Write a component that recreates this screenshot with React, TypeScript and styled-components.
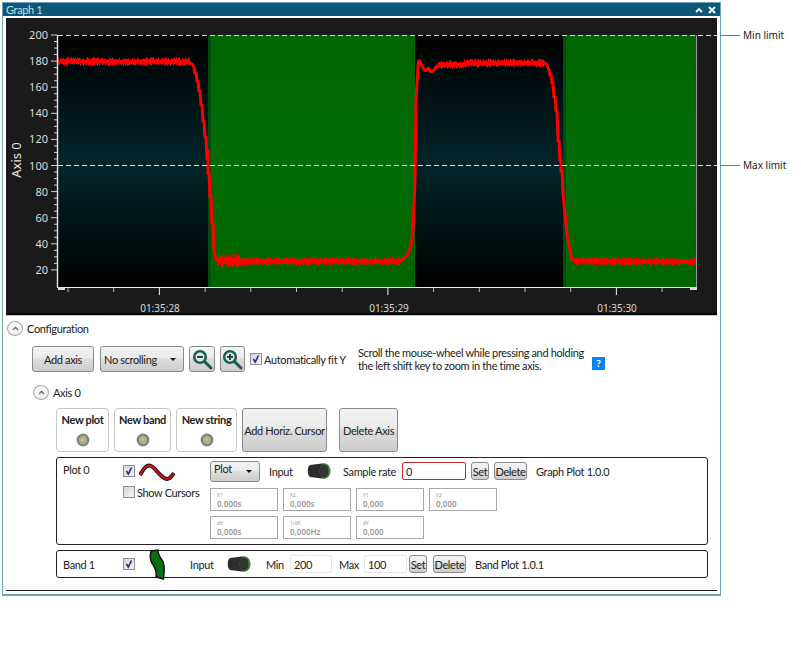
import * as React from 'react';
import styled, { createGlobalStyle } from 'styled-components';

const GlobalStyle = createGlobalStyle`
  html, body {
    margin: 0;
    background: #ffffff;
    font-family: Lato, "Noto Sans", sans-serif;
    font-size: 11px;
    letter-spacing: -0.35px;
    color: #222222;
  }
`;

const Page = styled.div`
  position: relative;
  width: 801px;
  height: 660px;
  padding: 2px 0 0 2px;
  box-sizing: border-box;
  overflow: hidden;
`;

const Window = styled.div`
  width: 719px;
  height: 594px;
  box-sizing: border-box;
  border: 1px solid #6fa3bd;
  border-bottom-width: 2px;
  background: #ffffff;
`;

const TitleBar = styled.div`
  height: 13px;
  background: #0b5878;
  color: #c9dbe4;
  display: flex;
  align-items: center;
  justify-content: space-between;
  padding: 0 4px 0 3px;
  line-height: 13px;
`;

const TitleIcons = styled.div`
  display: flex;
  align-items: center;
  gap: 5px;
`;

const ChartPanel = styled.div`
  margin: 2px 0 0 3px;
  width: 711px;
  height: 297px;
  background: #1a1a1a;
  border-bottom: 1px solid #c8c8c8;
  svg {
    display: block;
  }
`;

const Config = styled.div`
  margin-left: 3px;
  width: 711px;
  height: 275px;
  box-sizing: border-box;
  padding-top: 5px;
  border-bottom: 1px solid #1a1a1a;
`;

const ToggleRow = styled.div<{ $indent: number }>`
  display: flex;
  align-items: center;
  gap: 4px;
  padding-left: ${p => p.$indent}px;
  height: 15px;
`;

const ToggleCircle = styled.span`
  width: 16px;
  height: 15px;
  box-sizing: border-box;
  border: 1px solid #a8a8a8;
  border-radius: 50%;
  background: linear-gradient(#ffffff, #ececec);
  display: flex;
  align-items: center;
  justify-content: center;
`;

const Toolbar = styled.div`
  display: flex;
  align-items: center;
  height: 26px;
  margin-top: 10px;
  padding-left: 26px;
`;

const Button = styled.button<{ $w: number; $h?: number; $ml?: number }>`
  width: ${p => p.$w}px;
  height: ${p => p.$h ?? 26}px;
  margin-left: ${p => p.$ml ?? 0}px;
  padding: 0;
  box-sizing: border-box;
  border: 1px solid #8a8a8a;
  border-radius: 3px;
  background: linear-gradient(#f3f3f3 0%, #ebebeb 45%, #dddddd 50%, #cdcdcd 100%);
  font: inherit;
  letter-spacing: inherit;
  color: #222222;
  white-space: nowrap;
  display: flex;
  align-items: center;
  justify-content: center;
  flex: none;
`;

const Select = styled(Button)<{ $alignTop?: boolean }>`
  justify-content: space-between;
  padding: 0 7px 0 3px;
  align-items: ${p => (p.$alignTop ? 'flex-start' : 'center')};
  &::after {
    content: '';
    align-self: center;
    border-left: 3px solid transparent;
    border-right: 3px solid transparent;
    border-top: 3px solid #111111;
  }
`;

const Check = styled.span<{ $ml?: number }>`
  width: 12px;
  height: 12px;
  box-sizing: border-box;
  border: 1px solid #8f8f8f;
  background: linear-gradient(135deg, #d6d6d6, #f4f4f4);
  margin-left: ${p => p.$ml ?? 0}px;
  display: flex;
  align-items: center;
  justify-content: center;
  flex: none;
`;

const CheckLabel = styled.span<{ $w?: number }>`
  margin-left: 2px;
  white-space: nowrap;
  width: ${p => (p.$w ? `${p.$w}px` : 'auto')};
  flex: none;
`;

const HelpText = styled.div`
  margin-left: 11px;
  width: 234px;
  line-height: 13px;
  white-space: nowrap;
`;

const HelpBadge = styled.span`
  width: 13px;
  height: 13px;
  margin-top: 9px;
  background: #0a84f0;
  color: #ffffff;
  font-weight: 700;
  font-size: 10px;
  line-height: 13px;
  text-align: center;
`;

const AxisToggle = styled(ToggleRow)`
  margin-top: 13px;
`;

const PlotActions = styled.div`
  display: flex;
  margin: 8px 0 0 50px;
  height: 44px;
`;

const NewCard = styled.div<{ $w: number }>`
  width: ${p => p.$w}px;
  height: 44px;
  margin-right: 5px;
  box-sizing: border-box;
  border: 1px solid #c6c6c6;
  border-radius: 4px;
  font-weight: 700;
  text-align: center;
  padding-top: 4px;
  white-space: nowrap;
  svg {
    display: block;
    margin: 7px auto 0;
  }
`;

const PlotBox = styled.div`
  margin: 5px 0 0 50px;
  width: 652px;
  height: 88px;
  box-sizing: border-box;
  border: 1px solid #222222;
  border-radius: 3px;
  padding: 2px 0 0 6px;
  display: flex;
`;

const BandBox = styled.div`
  margin: 5px 0 0 50px;
  width: 652px;
  height: 28px;
  box-sizing: border-box;
  border: 1px solid #222222;
  border-radius: 3px;
  padding-left: 6px;
  display: flex;
  align-items: center;
`;

const NameCell = styled.div<{ $pt?: number }>`
  width: 60px;
  flex: none;
  padding-top: ${p => p.$pt ?? 0}px;
`;

const CheckColumn = styled.div`
  width: 87px;
  flex: none;
  display: flex;
  flex-direction: column;
`;

const CheckRow = styled.div<{ $h: number }>`
  display: flex;
  align-items: center;
  height: ${p => p.$h}px;
`;

const FieldsColumn = styled.div`
  display: flex;
  flex-direction: column;
`;

const FieldsTop = styled.div`
  display: flex;
  align-items: center;
  height: 22px;
`;

const Text = styled.span<{ $ml: number; $w?: number }>`
  margin-left: ${p => p.$ml}px;
  width: ${p => (p.$w ? `${p.$w}px` : 'auto')};
  white-space: nowrap;
  flex: none;
`;

const ValueGrid = styled.div`
  display: grid;
  grid-template-columns: repeat(4, 68px);
  grid-auto-rows: 23px;
  gap: 5px;
  margin-top: 6px;
`;

const ValueBox = styled.div`
  box-sizing: border-box;
  border: 1px solid #a8a8a8;
  padding: 3px 0 0 6px;
  color: #999999;
  font-family: "Noto Sans", sans-serif;
  letter-spacing: 0;
`;

const ValueLabel = styled.div`
  font-size: 5px;
  line-height: 7px;
`;

const ValueText = styled.div`
  font-size: 8px;
  line-height: 10px;
  font-weight: 600;
`;

const Field = styled.input<{ $w: number; $ml: number; $alert?: boolean }>`
  width: ${p => p.$w}px;
  height: 18px;
  margin-left: ${p => p.$ml}px;
  box-sizing: border-box;
  border: 1px solid ${p => (p.$alert ? '#c0282d' : '#e6e6e6')};
  border-radius: 2px;
  padding: 0 3px;
  font: inherit;
  letter-spacing: inherit;
  color: #222222;
  flex: none;
`;

const Annotation = styled.div<{ $top: number }>`
  position: absolute;
  left: 720px;
  top: ${p => p.$top - 8}px;
  height: 16px;
  display: flex;
  align-items: center;
  gap: 3px;
  font-family: "Noto Sans", sans-serif;
  font-size: 10px;
  letter-spacing: 0;
  white-space: nowrap;
  &::before {
    content: '';
    width: 20px;
    height: 1px;
    background: #777777;
  }
`;

const yOf = (v: number) => 35 + (200 - v) * 1.305;

// repeatable jitter so the trace looks like the noisy signal
const noise = (i: number) => {
  const s = Math.sin(i * 12.9898) * 43758.5453;
  return s - Math.floor(s);
};

const tracePoints = [
  '58,61.5', '186,61.5', '188,61', '190,63', '192,64', '194,67', '195,74', '196,72', '197,82', '198,80',
  '199,92', '200,90', '201,106', '202,104', '203,122', '204,120', '205,138', '206,136', '207,160', '208,150',
  '208,175', '209,172', '210,198', '211,195', '212,225', '213,222', '214,250', '216,260', '400,261.5',
  '404,258', '408,254', '411,245', '413,232', '415,180', '416,100', '418,66', '419,60', '422,66',
  '425,71', '428,68', '431,72', '434,70', '437,66', '470,64', '545,63',
  '547,65', '549,70', '550,76', '551,74', '552,84', '553,82', '554,98', '555,96', '556,112', '557,110',
  '558,142', '559,140', '560,162', '561,160', '561,172', '562,170', '563,194', '565,214', '567,234',
  '570,250', '572,260', '696,261.5',
].join(' ');

// the noise itself: one short vertical hair per pixel around the line
const hairs = (from: number, to: number, y0: number, y1: number, amp: number, seed: number) => {
  let d = '';
  for (let x = from, i = 0; x < to; x += 1, i++) {
    const y = y0 + ((y1 - y0) * (x - from)) / (to - from);
    const up = amp * (0.35 + 0.65 * noise(i + seed));
    const down = amp * (0.35 + 0.65 * noise(i * 2 + seed + 77));
    d += `M${x + 0.5} ${(y - up).toFixed(1)}V${(y + down).toFixed(1)}`;
  }
  return d;
};

const tracePath = [
  hairs(58, 190, 61.5, 61.5, 4.5, 1),
  hairs(217, 240, 261, 261, 7, 300),
  hairs(240, 400, 261.5, 261.5, 4.5, 400),
  hairs(438, 470, 65, 64, 4.5, 600),
  hairs(470, 545, 63, 63, 4.5, 700),
  hairs(574, 696, 261.5, 261.5, 4.5, 900),
].join('');

const xTicks = Array.from({ length: 14 }, (_, i) => 68 + i * 45.7);
const yTicks = Array.from({ length: 37 }, (_, i) => 200 - i * 4 * 1.25);
const yLabels = [200, 180, 160, 140, 120, 100, 80, 60, 40, 20];
const timeLabels = [
  { x: 160, text: '01:35:28' },
  { x: 389, text: '01:35:29' },
  { x: 617, text: '01:35:30' },
];

const Chart = () => (
  <svg width="711" height="297" viewBox="6 18 711 297">
    <defs>
      <linearGradient id="plotBg" x1="0" y1="0" x2="0" y2="1">
        <stop offset="0" stopColor="#000000" />
        <stop offset="0.52" stopColor="#02252a" />
        <stop offset="1" stopColor="#000000" />
      </linearGradient>
      <linearGradient id="bandBg" x1="0" y1="0" x2="0" y2="1">
        <stop offset="0" stopColor="#006400" />
        <stop offset="0.5" stopColor="#026c08" />
        <stop offset="1" stopColor="#006400" />
      </linearGradient>
    </defs>
    <rect x="6" y="313" width="711" height="2" fill="#050505" />
    <rect x="58" y="35" width="638" height="252" fill="url(#plotBg)" />
    <rect x="208" y="35" width="207" height="252" fill="url(#bandBg)" />
    <rect x="563" y="35" width="133" height="252" fill="url(#bandBg)" />
    <rect x="208" y="35" width="3" height="252" fill="#034c10" />
    <rect x="563" y="35" width="3" height="252" fill="#034c10" />
    <polyline points={tracePoints} fill="none" stroke="#ff0000" strokeWidth="3" strokeLinejoin="bevel" />
    <path d={tracePath} fill="none" stroke="#ff0000" strokeWidth="1" />
    <line x1="57.5" y1="35" x2="57.5" y2="288" stroke="#e8e8e8" strokeWidth="1.4" />
    <line x1="58" y1="287.5" x2="697" y2="287.5" stroke="#f0f0f0" />
    <line x1="696.5" y1="35" x2="696.5" y2="288" stroke="#9a9a9a" />
    <rect x="58" y="287" width="7" height="3" fill="#d8d8d8" />
    <rect x="690" y="287" width="7" height="3" fill="#d8d8d8" />
    {yTicks.map(v => (
      <line
        key={v}
        x1={v % 20 === 0 ? 51 : 54}
        x2="57"
        y1={yOf(v)}
        y2={yOf(v)}
        stroke="#d0d0d0"
      />
    ))}
    {yLabels.map(v => (
      <text key={v} x="48" y={yOf(v) + 4} fill="#dcdcdc" fontSize="11" textAnchor="end" fontFamily="Noto Sans" letterSpacing="0">
        {v}
      </text>
    ))}
    <text
      transform="translate(21 160) rotate(-90)"
      fill="#e4e4e4"
      fontSize="13"
      textAnchor="middle"
      fontFamily="Noto Sans"
      letterSpacing="0"
    >
      Axis 0
    </text>
    {xTicks.map((x, i) => (
      <line
        key={x}
        x1={x}
        x2={x}
        y1="288"
        y2={(i - 2) % 5 === 0 ? 295 : 292}
        stroke={(i - 2) % 5 === 0 ? '#f0f0f0' : '#bdbdbd'}
      />
    ))}
    {timeLabels.map(t => (
      <text key={t.x} x={t.x} y="312" fill="#d8d8d8" fontSize="10" textAnchor="middle" fontFamily="Noto Sans" letterSpacing="0">
        {t.text}
      </text>
    ))}
    <line x1="58" x2="717" y1="35.5" y2="35.5" stroke="#dcdcdc" strokeDasharray="5 3" />
    <line x1="58" x2="717" y1="165.5" y2="165.5" stroke="#d8e0e0" strokeDasharray="5 3" />
  </svg>
);

const Chevron = () => (
  <svg width="7" height="5" viewBox="0 0 7 5">
    <path d="M1 4 L3.5 1.5 L6 4" fill="none" stroke="#7d7d7d" strokeWidth="1.6" />
  </svg>
);

const CheckMark = () => (
  <svg width="10" height="10" viewBox="0 0 10 10">
    <path d="M2.5 5 L4.3 8 L7.5 1.5" fill="none" stroke="#27279a" strokeWidth="1.6" />
  </svg>
);

const Magnifier = ({ plus }: { plus?: boolean }) => (
  <svg width="21" height="21" viewBox="0 0 21 21">
    <circle cx="8" cy="8" r="5.8" fill="#e4ebe8" stroke="#1a5f54" strokeWidth="2.6" />
    <path d="M12.5 12.5 L19 19" stroke="#1d5a50" strokeWidth="3" strokeLinecap="round" />
    <path d="M5 8 H11" stroke="#24433e" strokeWidth="2" />
    {plus && <path d="M8 5 V11" stroke="#24433e" strokeWidth="2" />}
  </svg>
);

const PinIcon = () => (
  <svg width="14" height="14" viewBox="0 0 14 14">
    <circle cx="7" cy="7" r="6.4" fill="#76877a" />
    <circle cx="7" cy="7" r="4.2" fill="#a9ad94" />
    <circle cx="7" cy="6.5" r="1.8" fill="#d8bd68" />
  </svg>
);

const WaveIcon = () => (
  <svg width="36" height="20" viewBox="0 0 36 20" style={{ marginLeft: 4 }}>
    <path d="M1 14 C5 7 8 3 12 5 C17 7 21 17 28 18 C31 18 33 15 35 12" fill="none" stroke="#111111" strokeWidth="4" />
    <path d="M1 14 C5 7 8 3 12 5 C17 7 21 17 28 18 C31 18 33 15 35 12" fill="none" stroke="#e0101a" strokeWidth="2" />
  </svg>
);

const BandIcon = () => (
  <svg width="16" height="30" viewBox="0 0 16 30" style={{ marginLeft: 14, overflow: 'visible' }}>
    <path
      d="M2 2 L9 1 C9 5 10 7 13 11 C16 14 15.5 22 14.5 30 L7 28 C8 23 7 20 3.5 15 C0.5 11 1 6 2 2 Z"
      fill="#0a6e12"
      stroke="#0a0a0a"
      strokeWidth="1.4"
    />
  </svg>
);

const KnobIcon = ({ ml }: { ml: number }) => (
  <svg width="24" height="16" viewBox="0 0 24 16" style={{ marginLeft: ml, flex: 'none' }}>
    <path d="M3 2 L15 0.5 H18 V15.5 H15 L3 14 C0 12.5 0 3.5 3 2 Z" fill="#2c2c2c" />
    <ellipse cx="18" cy="8" rx="5.6" ry="7.6" fill="#3f8a35" />
    <ellipse cx="17" cy="8" rx="4.6" ry="6.6" fill="#333333" />
  </svg>
);

const values = [
  ['X1', '0,000s'],
  ['X2', '0,000s'],
  ['Y1', '0,000'],
  ['Y2', '0,000'],
  ['dX', '0,000s'],
  ['1/dX', '0,000Hz'],
  ['dY', '0,000'],
];

const newCards = [
  { label: 'New plot', w: 53 },
  { label: 'New band', w: 57 },
  { label: 'New string', w: 61 },
];

export default function App() {
  return (
    <Page>
      <GlobalStyle />
      <Window>
        <TitleBar>
          <span>Graph 1</span>
          <TitleIcons>
            <svg width="8" height="6" viewBox="0 0 8 6">
              <path d="M1 5 L4 2 L7 5" fill="none" stroke="#ffffff" strokeWidth="1.8" />
            </svg>
            <svg width="8" height="8" viewBox="0 0 8 8">
              <path d="M1 1 L7 7 M7 1 L1 7" fill="none" stroke="#ffffff" strokeWidth="2" />
            </svg>
          </TitleIcons>
        </TitleBar>
        <ChartPanel>
          <Chart />
        </ChartPanel>
        <Config>
          <ToggleRow $indent={1}>
            <ToggleCircle>
              <Chevron />
            </ToggleCircle>
            <span>Configuration</span>
          </ToggleRow>
          <Toolbar>
            <Button $w={62}>Add axis</Button>
            <Select $w={84} $ml={6}>No scrolling</Select>
            <Button $w={26} $ml={5}>
              <Magnifier />
            </Button>
            <Button $w={25} $ml={5}>
              <Magnifier plus />
            </Button>
            <Check $ml={5}>
              <CheckMark />
            </Check>
            <CheckLabel $w={83}>Automatically fit Y</CheckLabel>
            <HelpText>
              Scroll the mouse-wheel while pressing and holding
              <br />
              the left shift key to zoom in the time axis.
            </HelpText>
            <HelpBadge>?</HelpBadge>
          </Toolbar>
          <AxisToggle $indent={27}>
            <ToggleCircle>
              <Chevron />
            </ToggleCircle>
            <span>Axis 0</span>
          </AxisToggle>
          <PlotActions>
            {newCards.map(c => (
              <NewCard key={c.label} $w={c.w}>
                {c.label}
                <PinIcon />
              </NewCard>
            ))}
            <Button $w={85} $h={44}>Add Horiz. Cursor</Button>
            <Button $w={59} $h={44} $ml={12}>Delete Axis</Button>
          </PlotActions>
          <PlotBox>
            <NameCell $pt={3}>Plot 0</NameCell>
            <CheckColumn>
              <CheckRow $h={21}>
                <Check>
                  <CheckMark />
                </Check>
                <WaveIcon />
              </CheckRow>
              <CheckRow $h={22}>
                <Check />
                <CheckLabel>Show Cursors</CheckLabel>
              </CheckRow>
            </CheckColumn>
            <FieldsColumn>
              <FieldsTop>
                <Select $w={50} $h={21} $alignTop>Plot</Select>
                <Text $ml={9} $w={27}>Input</Text>
                <KnobIcon ml={11} />
                <Text $ml={12} $w={59}>Sample rate</Text>
                <Field $w={64} $ml={0} $alert defaultValue="0" />
                <Button $w={18} $h={18} $ml={5}>Set</Button>
                <Button $w={33} $h={18} $ml={5}>Delete</Button>
                <Text $ml={9}>Graph Plot 1.0.0</Text>
              </FieldsTop>
              <ValueGrid>
                {values.map(([label, value]) => (
                  <ValueBox key={label}>
                    <ValueLabel>{label}</ValueLabel>
                    <ValueText>{value}</ValueText>
                  </ValueBox>
                ))}
              </ValueGrid>
            </FieldsColumn>
          </PlotBox>
          <BandBox>
            <NameCell>Band 1</NameCell>
            <Check>
              <CheckMark />
            </Check>
            <BandIcon />
            <Text $ml={25} $w={27}>Input</Text>
            <KnobIcon ml={10} />
            <Text $ml={15} $w={24}>Min</Text>
            <Field $w={42} $ml={0} defaultValue="200" />
            <Text $ml={7} $w={25}>Max</Text>
            <Field $w={43} $ml={0} defaultValue="100" />
            <Button $w={18} $h={18} $ml={2}>Set</Button>
            <Button $w={33} $h={18} $ml={6}>Delete</Button>
            <Text $ml={9}>Band Plot 1.0.1</Text>
          </BandBox>
        </Config>
      </Window>
      <Annotation $top={35}>Min limit</Annotation>
      <Annotation $top={165}>Max limit</Annotation>
    </Page>
  );
}
